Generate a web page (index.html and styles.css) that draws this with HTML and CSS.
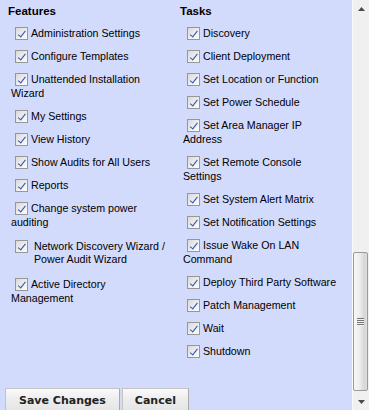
FILE: index.html
```html
<!DOCTYPE html>
<html>
<head>
<meta charset="utf-8">
<title>Permissions</title>
<link rel="stylesheet" href="styles.css">
</head>
<body>
<div class="page">
  <div class="content">
    <div class="columns">
      <div class="col">
        <div class="col-title">Features</div>
        <div class="item"><span class="cb"></span>Administration Settings</div>
        <div class="item"><span class="cb"></span>Configure Templates</div>
        <div class="item"><span class="cb"></span>Unattended Installation Wizard</div>
        <div class="item"><span class="cb"></span>My Settings</div>
        <div class="item"><span class="cb"></span>View History</div>
        <div class="item"><span class="cb"></span>Show Audits for All Users</div>
        <div class="item"><span class="cb"></span>Reports</div>
        <div class="item"><span class="cb"></span>Change system power auditing</div>
        <div class="item item-split"><span class="cb"></span><span class="item-text">Network Discovery Wizard / Power Audit Wizard</span></div>
        <div class="item"><span class="cb"></span>Active Directory Management</div>
      </div>
      <div class="col">
        <div class="col-title">Tasks</div>
        <div class="item"><span class="cb"></span>Discovery</div>
        <div class="item"><span class="cb"></span>Client Deployment</div>
        <div class="item"><span class="cb"></span>Set Location or Function</div>
        <div class="item"><span class="cb"></span>Set Power Schedule</div>
        <div class="item"><span class="cb"></span>Set Area Manager IP Address</div>
        <div class="item"><span class="cb"></span>Set Remote Console Settings</div>
        <div class="item"><span class="cb"></span>Set System Alert Matrix</div>
        <div class="item"><span class="cb"></span>Set Notification Settings</div>
        <div class="item"><span class="cb"></span>Issue Wake On LAN Command</div>
        <div class="item"><span class="cb"></span>Deploy Third Party Software</div>
        <div class="item"><span class="cb"></span>Patch Management</div>
        <div class="item"><span class="cb"></span>Wait</div>
        <div class="item"><span class="cb"></span>Shutdown</div>
      </div>
    </div>
    <div class="actions">
      <button class="btn btn-save" type="button">Save Changes</button>
      <button class="btn" type="button">Cancel</button>
    </div>
  </div>
  <div class="scrollbar">
    <div class="sb-btn"><svg width="7" height="4" viewBox="0 0 7 4"><polygon points="3.5,0 7,4 0,4" class="sb-arrow"/></svg></div>
    <div class="sb-track">
      <div class="sb-thumb"><div class="sb-grip"></div></div>
    </div>
    <div class="sb-btn"><svg width="7" height="4" viewBox="0 0 7 4"><polygon points="0,0 7,0 3.5,4" class="sb-arrow"/></svg></div>
  </div>
</div>
</body>
</html>
```

FILE: styles.css
```css
html, body {
  margin: 0;
  padding: 0;
}

body {
  background: #d3dbfd;
  font-family: "Liberation Sans", Arial, sans-serif;
  color: #000;
}

.page {
  display: flex;
  width: 369px;
  height: 410px;
  overflow: hidden;
}

.content {
  flex: 1;
  min-width: 0;
  padding-top: 4px;
}

.columns {
  display: grid;
  grid-template-columns: 172px 1fr;
  padding-left: 8px;
}

.col-title {
  font-weight: bold;
  font-size: 11.5px;
  line-height: 14px;
  margin-bottom: 8px;
}

.item {
  font-size: 10.67px;
  line-height: 14px;
  margin: 0 12px 9px 3px;
}

.cb {
  display: inline-block;
  position: relative;
  box-sizing: border-box;
  width: 13px;
  height: 13px;
  margin: 0 3px 0 4px;
  vertical-align: -3px;
  border: 1px solid #979797;
  background: linear-gradient(135deg, #d9d9d9 0%, #eeeeee 55%, #fcfcfc 100%);
}

.cb::after {
  content: "";
  position: absolute;
  left: 3.5px;
  top: 0.5px;
  width: 2.5px;
  height: 6.5px;
  border-right: 1.6px solid #3556ad;
  border-bottom: 1.6px solid #3556ad;
  transform: rotate(38deg);
}

.item-split {
  display: flex;
  align-items: flex-start;
  padding-top: 2px;
  margin-bottom: 11px;
  line-height: 13px;
}

.item-split .cb {
  flex: none;
  margin: 0 6px 0 4px;
}

.item-text {
  flex: 1;
}

.actions {
  display: flex;
  gap: 2px;
  padding: 21px 0 0 5px;
}

.btn {
  font-family: "DejaVu Sans", Verdana, sans-serif;
  font-weight: bold;
  font-size: 11px;
  line-height: 13px;
  color: #222;
  padding: 5px 12px;
  margin: 0;
  border: 1px solid #c4c4c4;
  border-right-color: #a9a9a9;
  border-bottom-color: #a9a9a9;
  border-radius: 1px;
  background: linear-gradient(#fafafa, #ededed 45%, #e4e4e4);
}

.btn-save {
  padding-left: 13px;
  padding-right: 13px;
}

.scrollbar {
  flex: none;
  width: 17px;
  display: flex;
  flex-direction: column;
  background: #f0f0f0;
  box-shadow: inset 1px 0 0 #f9f9f9;
}

.sb-btn {
  height: 17px;
  flex: none;
  display: flex;
  align-items: center;
  justify-content: center;
  padding-left: 1px;
}

.sb-arrow {
  fill: #4a4a4a;
}

.sb-track {
  flex: 1;
  display: flex;
  flex-direction: column;
  justify-content: flex-end;
}

.sb-thumb {
  height: 139px;
  margin: 0 1px 2px 1px;
  box-sizing: border-box;
  border: 1px solid #999;
  border-radius: 2px;
  background: linear-gradient(to right, #f7f7f7 0%, #ededed 45%, #d6d6d6 80%, #dedede 100%);
  display: flex;
  align-items: center;
  justify-content: center;
}

.sb-grip {
  width: 7px;
  height: 8px;
  background: repeating-linear-gradient(to bottom, #747474 0, #747474 1px, #f2f2f2 1px, #f2f2f2 2px);
}
```
